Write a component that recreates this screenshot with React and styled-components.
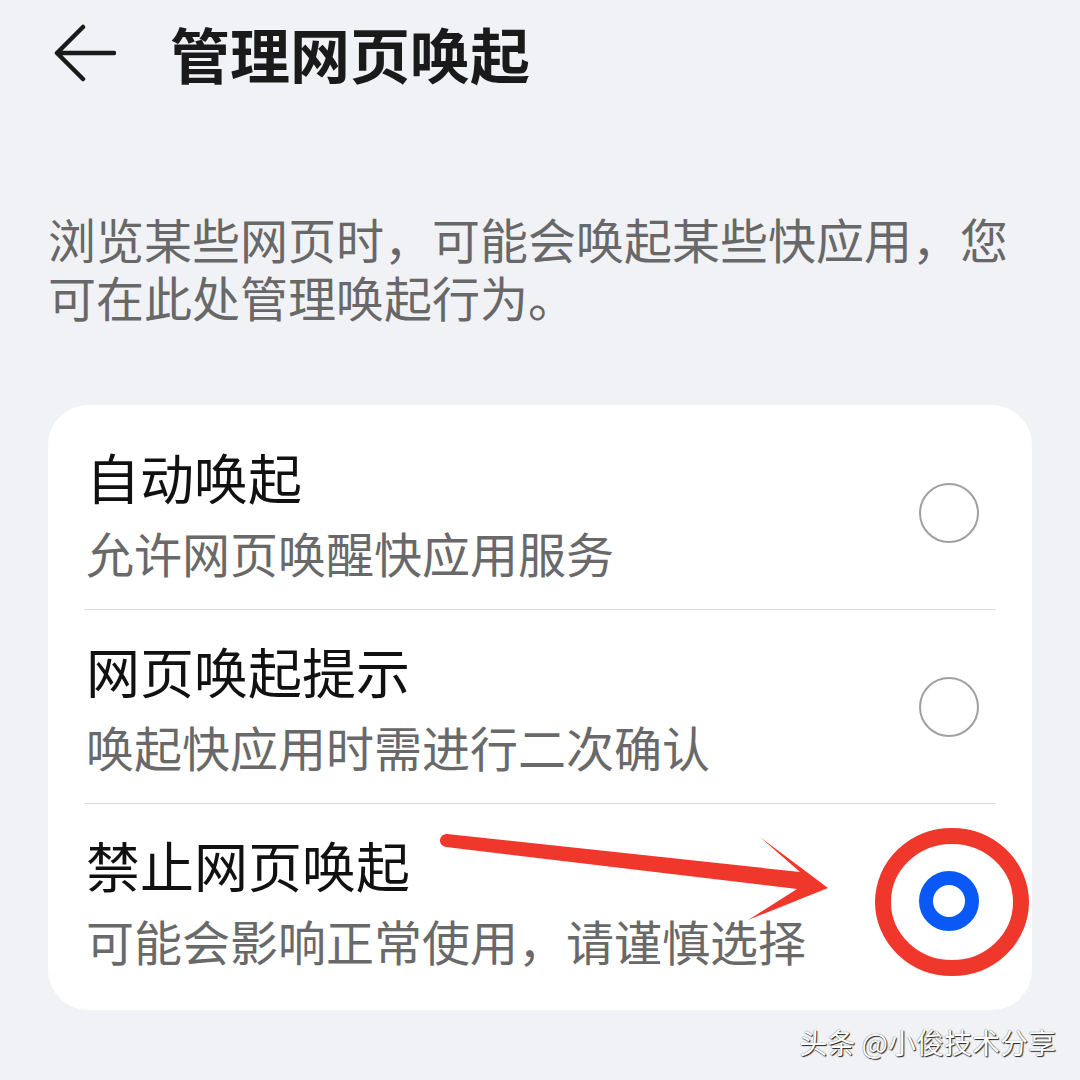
import React from "react";
import styled, { createGlobalStyle } from "styled-components";

const Global = createGlobalStyle`
  html, body { margin: 0; padding: 0; background: #f1f2f6; }
  body { font-family: "Noto Sans CJK SC", "Noto Sans", sans-serif; }
`;

const Page = styled.div`
  position: relative;
  width: 1080px;
  height: 1080px;
  overflow: hidden;
  background: #f1f2f6;
`;

const Header = styled.header`
  height: 106px;
  display: flex;
  align-items: center;
  padding-left: 54px;
  gap: 54px;
`;

const BackIcon = styled.svg`
  width: 62px;
  height: 58px;
  flex: none;
`;

const Title = styled.h1`
  margin: 0;
  font-size: 60px;
  line-height: 72px;
  font-weight: 700;
  color: #1a1a1a;
`;

const Desc = styled.div`
  margin: 103px 0 0;
  padding: 0 48px;
  display: flex;
  flex-direction: column;
`;

const DescLine = styled.span`
  display: block;
  font-size: 48px;
  line-height: 58px;
  height: 58px;
  color: #686868;
  white-space: nowrap;
`;

const Card = styled.section`
  margin: 80px 48px 0;
  background: #ffffff;
  border-radius: 40px;
  padding: 11px 36px 12px;
  display: flex;
  flex-direction: column;
`;

const Row = styled.div`
  display: flex;
  align-items: center;
  height: 194px;
  box-sizing: border-box;
  border-bottom: ${(p) => (p.$last ? "none" : "1.5px solid #dcdcdc")};
`;

const Texts = styled.div`
  flex: 1;
  display: flex;
  flex-direction: column;
  padding-left: 2px;
`;

const ItemTitle = styled.div`
  font-size: 54px;
  line-height: 72px;
  color: #111111;
  font-weight: 400;
`;

const ItemSub = styled.div`
  margin-top: 6px;
  font-size: 48px;
  line-height: 66px;
  color: #696969;
`;

const Radio = styled.div`
  width: 60px;
  height: 60px;
  box-sizing: border-box;
  border-radius: 50%;
  margin-right: 17px;
  flex: none;
  border: ${(p) => (p.$checked ? "14px solid #0a59f7" : "2.5px solid #a0a0a0")};
  background: #fff;
`;

const Overlay = styled.svg`
  position: absolute;
  left: 0;
  top: 0;
  width: 1080px;
  height: 1080px;
  pointer-events: none;
`;

const Watermark = styled.div`
  position: absolute;
  right: 24px;
  bottom: 20px;
  font-size: 28px;
  line-height: 36px;
  color: #ffffff;
  text-shadow: 1px 1px 1px #222, 0 0 1px #444;
  white-space: nowrap;
`;

const items = [
  { title: "自动唤起", sub: "允许网页唤醒快应用服务", checked: false },
  { title: "网页唤起提示", sub: "唤起快应用时需进行二次确认", checked: false },
  { title: "禁止网页唤起", sub: "可能会影响正常使用，请谨慎选择", checked: true },
];

export default function App() {
  return (
    <Page>
      <Global />
      <Header>
        <BackIcon viewBox="0 0 62 58">
          <path
            d="M60 29 H4 M29 3 L3 29 L29 55"
            fill="none"
            stroke="#1a1a1a"
            strokeWidth="4.5"
            strokeLinecap="round"
            strokeLinejoin="round"
          />
        </BackIcon>
        <Title>管理网页唤起</Title>
      </Header>
      <Desc>
        <DescLine>浏览某些网页时，可能会唤起某些快应用，您</DescLine>
        <DescLine>可在此处管理唤起行为。</DescLine>
      </Desc>
      <Card>
        {items.map((it, i) => (
          <Row key={it.title} $last={i === items.length - 1}>
            <Texts>
              <ItemTitle>{it.title}</ItemTitle>
              <ItemSub>{it.sub}</ItemSub>
            </Texts>
            <Radio $checked={it.checked} />
          </Row>
        ))}
      </Card>
      <Overlay viewBox="0 0 1080 1080">
        <ellipse cx="952" cy="902" rx="69" ry="66" fill="none" stroke="#f0372c" strokeWidth="16" />
        <path
          d="M447 834 L800 872 L760 837 L828 888 L748 920 L797 889 L446 847 A6.5 6.5 0 0 1 447 834 Z"
          fill="#f0372c"
        />
      </Overlay>
      <Watermark>头条 @小俊技术分享</Watermark>
    </Page>
  );
}
